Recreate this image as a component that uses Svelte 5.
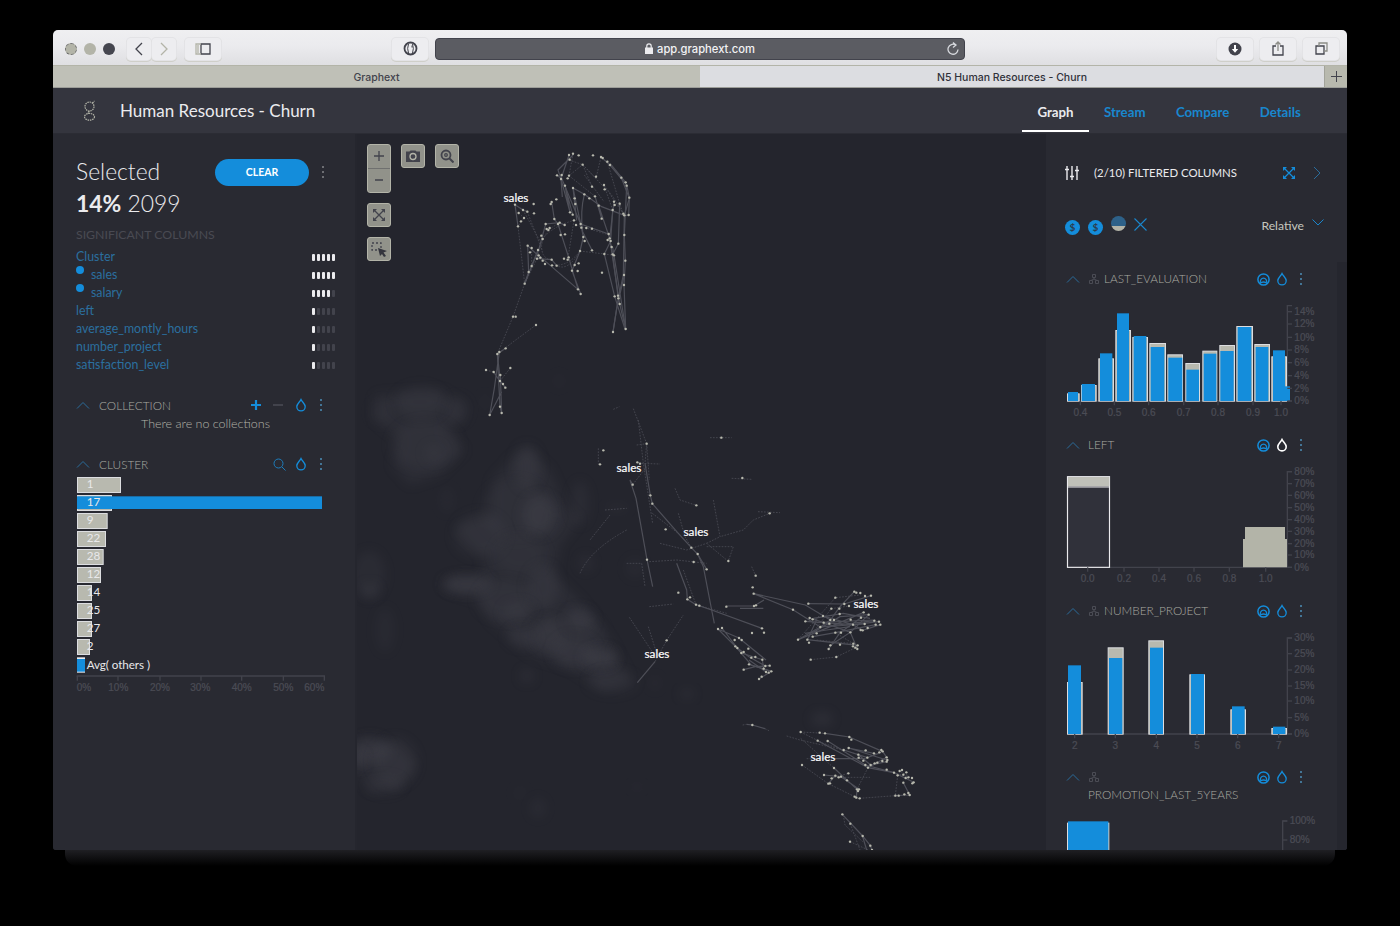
<script>
  const significant = [
    { name: 'Cluster', level: 5, sub: false },
    { name: 'sales', level: 5, sub: true },
    { name: 'salary', level: 4, sub: true },
    { name: 'left', level: 1, sub: false },
    { name: 'average_montly_hours', level: 1, sub: false },
    { name: 'number_project', level: 1, sub: false },
    { name: 'satisfaction_level', level: 1, sub: false }
  ];
  const clusters = [
    ['1', 132], ['17', 105], ['9', 92], ['22', 87], ['28', 80], ['12', 72],
    ['14', 45], ['25', 45], ['27', 45], ['2', 39]
  ];
  const clusterTicks = [[52, '0%', 72], [174, '10%', 175], [300, '20%', 300], [423, '30%', 421], [545, '40%', 545], [670, '50%', 670], [793, '60%', 763]];

  // Bars: [x, width, top]; charts use three units per pixel.
  const charts = [
    {
      title: 'LAST_EVALUATION', tree: true, box: '3 468 873 396', h: 132, base: 783, top: 497, axis: 727,
      grey: [[66, 38, 760], [108, 47, 735], [160, 47, 655], [211, 47, 570], [262, 47, 591], [313, 50, 609], [367, 47, 643], [421, 44, 669], [472, 45, 632], [523, 47, 615], [574, 50, 558], [628, 47, 612], [679, 47, 649]],
      blue: [[69, 30, 756], [110, 40, 732], [165, 37, 640], [216, 36, 520], [266, 38, 588], [317, 41, 621], [370, 42, 653], [424, 38, 689], [476, 38, 641], [526, 40, 633], [578, 41, 561], [632, 38, 621], [684, 36, 631], [708, 27, 739]],
      y: [['14%', 515], ['12%', 552], ['10%', 592], ['8%', 630], ['6%', 668], ['4%', 707], ['2%', 745], ['0%', 783]],
      x: [['0.4', 106], ['0.5', 208], ['0.6', 311], ['0.7', 416], ['0.8', 519], ['0.9', 624], ['1.0', 708]]
    },
    {
      title: 'LEFT', tree: false, box: '3 96 873 396', h: 132, base: 412, top: 125, axis: 727, white: true,
      grey: [], blue: [],
      y: [['80%', 125], ['70%', 161], ['60%', 196], ['50%', 233], ['40%', 269], ['30%', 304], ['20%', 341], ['10%', 375], ['0%', 412]],
      x: [['0.0', 128], ['0.2', 237], ['0.4', 342], ['0.6', 447], ['0.8', 553], ['1.0', 662]]
    },
    {
      title: 'NUMBER_PROJECT', tree: true, box: '3 84 873 396', h: 132, base: 402, top: 114, axis: 727,
      grey: [[66, 47, 246], [188, 48, 142], [310, 47, 121], [433, 47, 223], [556, 47, 328], [679, 47, 384]],
      blue: [[69, 39, 196], [192, 40, 174], [315, 39, 143], [438, 39, 222], [561, 38, 319], [684, 37, 380]],
      y: [['30%', 114], ['25%', 161], ['20%', 210], ['15%', 258], ['10%', 303], ['5%', 353], ['0%', 402]],
      x: [['2', 89], ['3', 211], ['4', 334], ['5', 456], ['6', 578], ['7', 701]]
    },
    {
      title: 'PROMOTION_LAST_5YEARS', tree: true, box: '3 582 873 396', h: 132, base: 990, top: 663, axis: 713, wrap: true,
      grey: [[66, 127, 668]], blue: [[69, 121, 664]],
      y: [['100%', 663], ['80%', 720]], x: []
    }
  ];

  const clouds = [
    [420, 402, 25, 16, .35], [425, 445, 34, 24, .33], [382, 412, 12, 12, .2], [457, 410, 12, 14, .25], [434, 453, 10, 9, .3],
    [527, 467, 13, 22, .5], [540, 515, 18, 20, .65], [515, 510, 34, 30, .25], [480, 535, 26, 22, .35], [520, 555, 26, 20, .3],
    [580, 503, 9, 22, .3], [467, 584, 25, 9, .65], [505, 600, 28, 20, .35], [543, 587, 16, 22, .45], [518, 612, 16, 10, .4],
    [548, 635, 18, 16, .5], [522, 637, 15, 10, .4], [580, 620, 14, 12, .55], [574, 652, 22, 16, .45], [600, 658, 17, 10, .75],
    [612, 682, 24, 11, .35], [571, 635, 35, 24, .2], [369, 575, 16, 24, .3], [370, 590, 9, 7, .4], [385, 630, 9, 22, .22],
    [370, 750, 20, 13, .6], [395, 762, 22, 24, .4], [385, 785, 18, 9, .3], [358, 760, 7, 9, .6], [527, 676, 7, 7, .35],
    [447, 500, 7, 13, .17], [586, 563, 7, 8, .3], [635, 568, 9, 10, .22], [538, 808, 8, 10, .25], [520, 793, 6, 6, .15],
    [822, 719, 11, 7, .4], [687, 694, 7, 5, .35], [559, 381, 4, 7, .2], [637, 787, 5, 4, .2], [655, 683, 5, 7, .2], [617, 508, 12, 4, .25], [485, 402, 4, 8, .18]
  ];
  const banks = [
    'M530,450L550,470L565,505L580,520L560,545L555,575L580,600L610,640L630,680L605,690L570,668L530,655L490,620L480,600L445,590L450,578L480,578L485,558L455,528L490,515L492,480L515,455Z',
    'M375,395L440,390L465,405L462,420L445,430L465,450L440,475L410,485L392,465L400,440L375,420Z',
    'M357,742L395,745L415,765L400,788L370,792L357,772Z'
  ];

  // Nodes and links of each region of the network, three units per pixel.
  const regions = [
    {
      ox: 355, oy: 135,
      nodes: [[642,60],[654,56],[644,74],[671,61],[683,89],[714,61],[738,66],[743,69],[757,80],[765,90],[799,128],[812,142],[815,152],[823,188],[821,240],[808,241],[805,236],[794,206],[777,200],[779,210],[773,225],[747,150],[749,163],[723,125],[711,155],[638,130],[642,122],[606,121],[620,120],[618,132],[630,152],[654,159],[659,190],[661,207],[688,178],[703,190],[720,184],[731,212],[740,251],[590,201],[587,207],[604,193],[598,252],[609,267],[614,263],[572,267],[575,282],[584,279],[580,285],[629,270],[645,232],[653,239],[657,256],[663,270],[677,267],[679,278],[694,279],[685,306],[689,318],[711,346],[711,281],[761,297],[764,310],[767,318],[758,315],[790,326],[770,336],[773,358],[777,361],[748,357],[808,300],[811,377],[807,420],[807,450],[779,484],[789,482],[790,490],[794,507],[812,582],[774,591],[741,413],[675,348],[671,385],[659,390],[651,407],[668,408],[641,367],[638,374],[627,371],[605,392],[591,391],[590,374],[570,387],[563,377],[556,368],[551,361],[546,371],[549,345],[530,339],[518,332],[525,352],[530,393],[521,411],[509,446],[669,463],[677,477],[563,312],[617,300],[630,298],[559,302],[480,209],[491,234],[504,225],[517,230],[536,207],[537,235],[507,249],[498,259],[489,274],[474,545],[482,545],[543,570],[427,657],[433,651],[452,640],[466,699],[393,705],[416,711],[436,720],[435,738],[444,747],[451,758],[435,815],[440,834],[404,840]],
      links: ['M642,60L618,132L609,105L654,60','M618,125L677,267L654,159L665,256','M618,132L645,232L630,152L653,239','M606,121L618,130L622,186','M738,66L765,90L815,150L823,188L821,240L808,241','M765,85L812,142','M688,178L740,215L808,241M688,178L654,159','M688,178Q675,230 683,290L711,346','M720,184L740,251M731,212L764,310L773,358','M815,152L808,300L811,377L807,450L812,582','M799,128L823,190L808,241L805,420L790,490','M777,200L764,310L794,507L812,582','M773,225L767,318L748,357L779,484L810,582','M794,206L790,326L773,358L790,490L774,591','M808,420L785,520L774,591M773,336L812,582','M677,267L761,297','M677,267L685,306L675,348L651,407L677,477M609,267L641,367L669,463','M629,270L614,263L572,267L551,345L530,393L509,446','M518,332L556,368L546,371L590,374L605,392','M518,332L521,411L509,446','M551,361L669,463M549,345L509,446','M590,201L598,252L609,267','M480,209L489,274M480,209L504,225L517,230','M427,657L452,640M427,657L436,738L451,758','M427,657L435,815L440,834L436,720M433,651L418,760L404,840L440,770M416,711L440,747'],
      faint: ['M654,56L642,122L683,89M683,89L723,130L738,66','M757,80L794,206L805,236L777,190L747,150L773,225','M642,75L683,89L711,155M642,122L720,184','M663,270L764,300','M609,267Q580,280 563,312L546,371L509,446M530,339L530,393','M591,391Q640,395 675,348L748,357L777,361','M563,312Q550,370 591,374M563,312Q590,275 657,256','M675,348Q640,410 605,392M657,256L638,374','M504,225L556,320M491,234L507,249L489,274L509,446M517,230L563,350','M509,446L474,545L427,657M543,570L482,615L427,657','M466,699L435,738M393,705L416,711','M683,89L760,170L800,230M688,120L747,200']
    },
    {
      ox: 560, oy: 400,
      nodes: [[130,151],[120,193],[232,187],[240,191],[260,131],[218,254],[271,286],[277,311],[261,479],[409,316],[317,388],[484,113],[547,234],[629,340],[394,443],[413,462],[401,486],[440,508],[505,483],[587,527],[578,562],[581,581],[355,578],[382,598],[390,592],[408,614],[418,617],[320,721],[499,620],[582,618],[588,616],[474,687],[486,684],[606,685],[612,698],[576,699],[537,714],[545,720],[524,720],[526,739],[532,744],[544,759],[551,756],[565,746],[586,771],[574,773],[567,793],[551,809],[607,779],[616,798],[611,806],[629,797],[634,814],[626,818],[618,816],[605,830],[597,837],[699,629],[745,611],[736,664],[749,654],[758,658],[714,719],[742,719],[747,728],[758,710],[770,700],[752,779],[829,771],[806,747],[811,736],[826,698],[843,698],[840,734],[880,731],[893,736],[892,747],[886,743],[879,739],[902,690],[908,691],[923,684],[914,672],[947,674],[943,662],[957,665],[961,674],[926,644],[911,637],[879,674],[872,659],[903,653],[853,612],[826,593],[838,626],[814,626],[789,648],[791,668],[811,660],[839,642],[867,618],[883,575],[889,578],[901,579],[915,588],[933,587],[781,681],[808,671],[822,660],[871,697]],
      links: ['M255,190L271,286L277,311','M218,254L210,240L228,295L261,479L278,560','M277,311L355,400L394,443L413,462L440,508','M350,490L380,570L382,598L408,614','M413,462L430,500L455,630L463,670','M408,614L455,630L606,685','M232,848L285,785','M500,618L582,618L612,600M540,625L610,625','M581,581L699,629L781,681M581,581L736,615L811,660','M474,687L537,714L618,780M474,687L526,739L574,795L634,814M486,684L532,744L567,770L616,798','M567,793L634,814L597,837M551,809L586,800L629,797M544,759L607,779L611,806M567,780L618,816','M714,719L781,681L811,660L840,620L883,575','M714,719L811,680L911,637','M745,611L853,612L933,587M749,654L791,668L871,697L926,644','M736,664L879,674L957,665M781,681L943,662M806,747L840,698L903,653M742,719L893,736M758,710L826,698L947,674','M811,736L871,697L892,747M789,648L879,674L908,691L961,674M742,719L770,660L749,654','M755,700L840,650L926,644M770,668L940,660M781,681L915,672M760,655L850,640L930,655M735,700L800,690L870,680'],
      faint: ['M220,26L260,131L255,190M260,131L268,240M235,60L250,190L278,370M260,200L218,254','M277,340L355,400M355,340L375,410L394,443M370,510L408,614M418,617L500,640','M208,652L290,775M265,680L290,760M285,785L320,721L370,645','M752,779L829,771L893,740M714,719L826,593L901,585M742,719L814,626L867,618M770,720L880,731L826,698','M460,300L480,410L550,390L580,360L629,340M200,390Q90,450 60,520M150,345L90,420M135,330L200,325','M300,430L380,450L440,430L500,480M440,430L480,410','M230,135L260,131M450,113L515,113M515,235L575,238M594,335L660,338M160,28L178,20M245,190L300,192','M345,265L360,300L409,316M440,440L520,440L505,483M200,490L245,490L255,560M268,485L350,480L440,490M268,620L340,612M575,500L587,527M115,145V193']
    },
    {
      ox: 690, oy: 690,
      nodes: [[187,105],[332,126],[389,128],[405,130],[383,152],[413,153],[336,225],[478,141],[484,149],[476,174],[461,180],[505,194],[506,203],[527,181],[532,203],[520,212],[526,225],[534,233],[542,225],[554,220],[562,218],[577,213],[552,190],[568,187],[574,180],[578,184],[590,202],[592,210],[590,215],[590,239],[612,248],[623,256],[629,243],[636,240],[640,254],[649,247],[647,264],[640,278],[655,262],[666,264],[671,277],[667,280],[655,309],[659,315],[643,313],[626,317],[616,317],[432,234],[402,255],[425,265],[436,257],[446,262],[453,260],[471,271],[475,250],[415,281],[420,280],[501,298],[507,298],[504,303],[494,320],[499,323],[509,325],[457,373],[481,401],[480,455],[518,438],[541,467],[546,480]],
      links: ['M170,103L187,105L225,116','M405,130L478,141L577,184M383,152L534,233M413,153L526,225L612,248','M461,180L532,203L574,187M476,174L590,210M430,206L527,206M505,194L542,225L590,215M476,174L552,190','M578,184L590,202L534,233L612,248L671,277','M432,234L501,298M402,255L453,260L507,298M415,281L436,257M501,298L499,323','M616,317L659,315L640,278','M457,373L518,438L541,467L546,480M518,440L530,480'],
      faint: ['M332,126L405,130M332,126L400,160L505,194M290,138L330,150L461,180M350,206L430,206','M332,145L432,234M336,225L415,281L494,320M425,265L475,250M446,262L540,262M534,233L501,298M509,325L616,317','M623,256L616,317M612,248L666,264L629,243M158,105L170,103M225,116L237,122','M460,375L465,405L518,455M481,401L510,480M480,455L535,480']
    }
  ];
  const labels = [[516, 198], [629, 468], [696, 532], [866, 604], [657, 654], [823, 757]];
</script>

{#snippet caret()}
  <svg class="caret" width="14" height="9" viewBox="0 0 14 9"><path d="M1 7.5 7 1.5l6 6" /></svg>
{/snippet}
{#snippet drop(white)}
  <svg class="drop" class:white width="12" height="14" viewBox="0 0 12 14"><path d="M6 1.500C4.500 4.500 1.800 6 1.800 8.700a4.200 4.200 0 0 0 8.400 0C10.200 6 7.500 4.500 6 1.500Z" /></svg>
{/snippet}
{#snippet dots()}
  <svg class="dots" width="4" height="14" viewBox="0 0 4 14"><circle cx="2" cy="2" r="1" /><circle cx="2" cy="7" r="1" /><circle cx="2" cy="12" r="1" /></svg>
{/snippet}

<div class="stage">
  <div class="window">
    <div class="toolbar">
      <div class="lights"><i></i><i></i><i class="dark"></i></div>
      <div class="nav">
        <span class="btn nb"><svg width="10" height="14" viewBox="0 0 10 14"><path d="M8 1 2 7l6 6" /></svg></span>
        <span class="btn nb pale"><svg width="10" height="14" viewBox="0 0 10 14"><path d="m2 1 6 6-6 6" /></svg></span>
      </div>
      <span class="btn side"><svg width="16" height="12" viewBox="0 0 16 12"><path d="M6 1h9v10H6Z" /><path d="M6 1H1v10h5M3 2v8" stroke="#b3b4a8" /></svg></span>
      <span class="btn onep"><svg width="15" height="15" viewBox="0 0 15 15"><ellipse cx="7.500" cy="7.500" rx="6" ry="6" stroke-width="1.800" /><path d="M5.500 3Q3.800 7.500 5.500 12M9.500 3Q11.200 7.500 9.500 12" stroke-width="1" /><path d="M9 4.500v2" stroke-width="1" /></svg></span>
      <div class="address">
        <svg class="lock" width="8" height="11" viewBox="0 0 8 11"><path d="M0 4.500h8V11H0Z" fill="#ebebee" /><path d="M1.800 5V3a2.200 2.200 0 0 1 4.400 0v2" fill="none" stroke="#ebebee" stroke-width="1.200" /></svg>
        <span>app.graphext.com</span>
        <svg class="reload" width="14" height="14" viewBox="0 0 14 14"><path d="M12 7.500a5 5 0 1 1-2.500-4.600M7 .500l3 2.400-3 2.600" /></svg>
      </div>
      <div class="actions">
        <span class="btn"><svg width="14" height="14" viewBox="0 0 14 14"><circle cx="7" cy="7" r="6.500" fill="#42434c" stroke="none" /><path d="M7 3v6" stroke="#fff" stroke-width="2" /><path d="M3.800 7 7 10.800 10.200 7Z" fill="#fff" stroke="none" /></svg></span>
        <span class="btn"><svg width="12" height="15" viewBox="0 0 12 15"><path d="M4 5H1v9h10V5H8" /><path d="M6 10V1M3.500 3.500 6 1l2.500 2.500" stroke="#8c8d87" /></svg></span>
        <span class="btn"><svg width="13" height="13" viewBox="0 0 13 13"><path d="M1 4h8v8H1Z" /><path d="M4 4V1h8v8H9" stroke="#8c8d87" /></svg></span>
      </div>
    </div>

    <div class="tabs">
      <div class="tab old">Graphext</div>
      <div class="tab cur">N5 Human Resources - Churn</div>
      <div class="plus"><svg width="11" height="11" viewBox="0 0 11 11"><path d="M5.500 0v11M0 5.500h11" stroke="#42434c" /></svg></div>
    </div>

    <header>
      <svg class="logo" width="14" height="22" viewBox="0 0 14 22"><circle cx="6.500" cy="6.500" r="4.500" /><path d="m9.500 3 2-2M6.500 11c-2 1-2 2 0 2.500" /><ellipse cx="6.500" cy="16.800" rx="5" ry="3.400" /></svg>
      <h1>Human Resources - Churn</h1>
      <nav><a class="on">Graph</a><a>Stream</a><a>Compare</a><a>Details</a></nav>
    </header>

    <main>
      <aside class="left">
        <div class="selhead"><span class="big">Selected</span><button>CLEAR</button>{@render dots()}</div>
        <div class="big count"><b>14%</b> 2099</div>
        <div class="sig">SIGNIFICANT COLUMNS</div>
        {#each significant as s}
          <div class="sigrow">
            {#if s.sub}<i class="bullet"></i>{/if}
            <span>{s.name}</span>
            <div class="meter">{#each [1, 2, 3, 4, 5] as n}<i class:full={n <= s.level}></i>{/each}</div>
          </div>
        {/each}
        <div class="group first">
          {@render caret()}<span class="name">COLLECTION</span>
          <div class="tools">
            <svg width="10" height="10" viewBox="0 0 10 10"><path d="M5 0v10M0 5h10" stroke="#148ddb" stroke-width="2.200" /></svg>
            <svg class="minus" width="10" height="10" viewBox="0 0 10 10"><path d="M0 5h10" stroke="#42434c" stroke-width="2" /></svg>
            {@render drop(false)}{@render dots()}
          </div>
        </div>
        <div class="none">There are no collections</div>
        <div class="group second">
          {@render caret()}<span class="name">CLUSTER</span>
          <div class="tools">
            <svg class="lens" width="13" height="13" viewBox="0 0 13 13"><circle cx="5.500" cy="5.500" r="4.500" /><path d="m9 9 3.500 3.500" /></svg>
            {@render drop(false)}{@render dots()}
          </div>
        </div>
        <svg class="clusters" width="295" height="226" viewBox="0 267 885 678">
          {#each clusters as c, i}
            <rect x="52.500" y={277.500 + i * 54} width={c[1] - 3} height="45" class="grey" />
            {#if i === 1}<rect x="51" y="334" width="735" height="38" fill="#148ddb" />{/if}
            <text x="80" y={310 + i * 54} class="lab">{c[0]}</text>
          {/each}
          <rect x="51" y="817" width="24" height="46" fill="#ebebee" />
          <rect x="51" y="822" width="24" height="38" fill="#148ddb" />
          <text x="80" y="851" class="lab" textLength="190">Avg( others )</text>
          <path d="M50 873H795" class="axis" />
          {#each clusterTicks as t}
            <path d="M{t[0]} 873v14" class="axis" />
            <text x={t[2]} y="917" class="tick mid">{t[1]}</text>
          {/each}
        </svg>
      </aside>

      <section class="graph">
        <svg class="net" width="691" height="717" viewBox="355 134 691 717">
          <defs><filter id="soft" x="-60%" y="-60%" width="220%" height="220%"><feGaussianBlur stdDeviation="5.500" /></filter></defs>
          {#each banks as b}<path d={b} fill="#42434c" opacity=".26" filter="url(#soft)" />{/each}
          {#each clouds as c}
            <ellipse cx={c[0]} cy={c[1]} rx={c[2]} ry={c[3]} opacity={c[4] * .75} fill="#42434c" filter="url(#soft)" />
          {/each}
          {#each regions as r}
            <g transform="translate({r.ox} {r.oy}) scale(.33333)">
              {#each r.faint as l}<path d={l} class="link faint" />{/each}
              {#each r.links as l}<path d={l} class="link" />{/each}
              {#each r.nodes as n}<circle cx={n[0]} cy={n[1]} r="3.600" fill="#b8b9ae" />{/each}
            </g>
          {/each}
          {#each labels as l}<text x={l[0]} y={l[1] + 4} class="sales">sales</text>{/each}
        </svg>
        <div class="controls">
          <div class="col">
            <span class="ctl zoomer"><svg width="12" height="38" viewBox="0 0 12 38"><path d="M6 2v10M1 7h10M2 31h8" /></svg></span>
            <span class="ctl"><svg width="14" height="14" viewBox="0 0 14 14"><path d="M2 2l10 10M12 2 2 12" /><path d="M1 1h4L1 5ZM13 1v4L9 1ZM1 13V9l4 4ZM13 13H9l4-4Z" fill="#42434c" stroke="none" /></svg></span>
            <span class="ctl"><svg width="16" height="16" viewBox="0 0 16 16"><path d="M1 2h9v7H1Z" stroke-dasharray="2 2" /><path d="m7 7 9 3-3.500 1.500L15 15l-2 1-2-3-2 2Z" fill="#33343d" stroke="none" /></svg></span>
          </div>
          <span class="ctl"><svg width="16" height="14" viewBox="0 0 16 14"><path d="M1 2.500h3.500l1-1h5l1 1H15V13H1Z" fill="#42434c" stroke="none" /><circle cx="8" cy="7.500" r="3" stroke="#b3b4a8" stroke-width="1.300" /></svg></span>
          <span class="ctl"><svg width="14" height="14" viewBox="0 0 14 14"><circle cx="6" cy="6" r="4.500" stroke-width="1.800" /><circle cx="6" cy="6" r="1.300" /><path d="m9 9 4.500 4.500" stroke-width="2" /></svg></span>
        </div>
      </section>

      <aside class="right">
        <div class="filt">
          <svg width="14" height="14" viewBox="0 0 14 14"><path d="M2 0v14M7 0v14M12 0v14M0 3.500h4M5 10.500h4M10 4.500h4" stroke="#ebebee" stroke-width="1.400" /></svg>
          <span>(2/10) FILTERED COLUMNS</span>
          <svg class="expand" width="12" height="12" viewBox="0 0 12 12"><path d="m1 1 10 10M11 1 1 11" /><path d="M0 0h4L0 4ZM12 0v4L8 0ZM0 12V8l4 4ZM12 12H8l4-4Z" fill="#148ddb" stroke="none" /></svg>
          <svg class="next" width="8" height="14" viewBox="0 0 8 14"><path d="m1 1 6 6-6 6" /></svg>
        </div>
        <div class="modes">
          <i class="coin">$</i><i class="coin">$</i><i class="half"></i>
          <svg class="cross" width="13" height="13" viewBox="0 0 13 13"><path d="m.5.500 12 12m0-12-12 12" /></svg>
          <span>Relative</span>
          <svg class="down" width="12" height="7" viewBox="0 0 12 7"><path d="m.5.500 5.500 5.500L11.500.500" /></svg>
        </div>
        <div class="list">
          <div class="charts">
            {#each charts as c}
              <div class="group" class:wrap={c.wrap}>
                {@render caret()}
                {#if c.tree}<svg class="tree" width="10" height="10" viewBox="0 0 10 10"><path d="M3.500.500h3v3h-3ZM.500 6.500h3v3h-3ZM6.500 6.500h3v3h-3ZM5 3.500v2M2 6.500l3-1.500 3 1.500" /></svg>{/if}
                <span class="name">{c.title}</span>
                <div class="tools">
                  <svg class="ring" width="13" height="13" viewBox="0 0 13 13"><circle cx="6.500" cy="6.500" r="5.600" /><path d="M3.500 9.500a3.200 3.200 0 1 1 6 0" stroke-width="1.200" /><path d="M2.500 10.500Q6.500 7.500 10.500 10.500" /></svg>
                  {@render drop(c.white)}{@render dots()}
                </div>
              </div>
              <svg class="chart" width="291" height={c.h} viewBox={c.box}>
                <path d="M{c.axis + 14} {c.top}H{c.axis}V{c.base}M66 {c.base}H{c.axis + 14}" class="axis" />
                {#each c.grey as b}<rect x={b[0] + 1.500} y={b[2] + 1.500} width={b[1] - 3} height={c.base - b[2] - 1} class="grey" />{/each}
                {#each c.blue as b}<rect x={b[0]} y={b[2]} width={b[1]} height={c.base - b[2]} fill="#148ddb" />{/each}
                {#if c.title === 'LEFT'}
                  <rect x="67.500" y="140" width="126" height="272" fill="#30313a" stroke="#ebebee" stroke-width="3.500" />
                  <rect x="69" y="141" width="124" height="28" fill="#bfc0b8" /><path d="M68 171H194" stroke="#ebebee" stroke-width="3" />
                  <path d="M594 412V327h6V291H720v36h6v85Z" fill="#b3b4a8" />
                {/if}
                {#each c.y as t}
                  <path d="M{c.axis} {t[1]}h14" class="axis" />
                  <text x={c.axis + 21} y={t[1] + 10} class="tick">{t[0]}</text>
                {/each}
                {#each c.x as t}
                  <path d="M{t[1]} {c.base}v13" class="axis" />
                  <text x={t[1]} y={c.base + 44} class="tick mid">{t[0]}</text>
                {/each}
              </svg>
            {/each}
          </div>
          <div class="rail"></div>
        </div>
      </aside>
    </main>
  </div>
  <div class="shade"></div>
</div>

<style>
  :global(body) { background: #000; }
  * { box-sizing: border-box; }
  svg { display: block; flex: none; fill: none; }
  .stage { width: 1400px; height: 926px; padding: 30px 53px 0; background: #000; font-family: Lato, sans-serif; overflow: hidden; }
  .window { width: 1294px; height: 820px; display: flex; flex-direction: column; border-radius: 5px 5px 3px 3px; overflow: hidden; background: #24252d; }
  .shade { height: 16px; margin: 0 12px; background: linear-gradient(#1f1f23, #000); border-radius: 0 0 12px 12px; }

  .toolbar { height: 35px; display: flex; align-items: center; background: linear-gradient(#efeff1, #ebebee 45%, #dfdfe2); padding: 2px 12px 0; }
  .lights { display: flex; gap: 7px; width: 62px; }
  .lights i { width: 12px; height: 12px; border-radius: 50%; background: #b3b4a8; }
  .lights i:first-child { border: 1px dashed #6c6d6c; }
  .lights i.dark { background: #45464f; }
  .btn { height: 22px; width: 36px; display: flex; align-items: center; justify-content: center; border-radius: 4px; background: #ededf0; box-shadow: 0 0 0 1px #e3e3e6, 0 1px 0 1px #cfcfc9; }
  .btn svg { stroke: #42434c; stroke-width: 1.300; }
  .nav { display: flex; gap: 1px; }
  .nb { width: 24px; }
  .pale svg { stroke: #b3b4a8; }
  .side { margin-left: 9px; width: 36px; }
  .onep { margin-left: 171px; }
  .address { position: relative; margin-left: 7px; width: 530px; height: 22px; border-radius: 4px; background: #5b5c62; border: 1px solid #42434c; display: flex; align-items: center; justify-content: center; gap: 4px; color: #f2f2f4; font: 500 11.200px Inter, sans-serif; }
  .reload { position: absolute; right: 4px; top: 3px; stroke: #d5d7dc; stroke-width: 1.300; }
  .actions { display: flex; gap: 7px; margin-left: auto; margin-right: -4px; }

  .tabs { height: 23px; display: flex; font: 500 10.500px Inter, sans-serif; color: #30313a; border-top: 1px solid #b3b4a8; border-bottom: 1px solid #9c9d98; }
  .tab { display: flex; align-items: center; justify-content: center; padding-top: 1px; }
  .old { width: 647px; background: #bfc0b7; color: #42434c; }
  .cur { width: 624px; background: #dcdde1; }
  .plus { flex: 1; background: #b8b9ae; display: flex; align-items: center; justify-content: center; border-left: 1px solid #a2a39a; }

  header { height: 46px; display: flex; align-items: center; background: #34353e; padding-left: 30px; border-bottom: 1px solid #2b2c34; }
  .logo { stroke: #b3b4a8; stroke-width: 1.200; stroke-dasharray: 1.500 .8; margin-right: 23px; margin-top: 1px; }
  h1 { margin: -1px 0 0; font-size: 17px; font-weight: 400; color: #ebebee; }
  nav { margin-left: auto; margin-right: 31px; display: flex; height: 46px; }
  nav a { padding: 15px 15.200px 0; font-size: 13.250px; line-height: 18px; font-weight: 700; color: #1987ce; height: 44px; }
  nav a.on { color: #ebebee; border-bottom: 2px solid #fff; }

  main { flex: 1; min-height: 0; display: flex; }
  .left { width: 304px; background: #292a32; padding: 22px 20px 0 23px; border-right: 2px solid #25262e; }
  .big { font-size: 22.900px; font-weight: 300; line-height: 28px; color: #ebebee; }
  .selhead { display: flex; align-items: center; height: 32px; }
  .selhead .big { margin-top: -2px; }
  button { margin-left: auto; width: 94px; height: 27px; border: 0; border-radius: 14px; background: #148ddb; color: #fff; font: 700 10.500px Lato, sans-serif; }
  .selhead :global(.dots) { margin: 0 10px 0 12px; fill: #85868a; }
  .count { line-height: 31px; height: 31px; }
  .count b { font-weight: 700; }
  .sig { height: 27px; line-height: 30px; margin-top: 1px; font-size: 12.300px; color: #494a53; font-weight: 400; }
  .sigrow { height: 18px; display: flex; align-items: center; font-size: 12.400px; color: #2b6f9f; font-weight: 400; }
  .bullet { width: 8px; height: 8px; border-radius: 50%; background: #148ddb; margin: -8px 7px 0 0; }
  .meter { margin-left: auto; display: flex; gap: 2px; margin-top: 2px; }
  .meter i { width: 3px; height: 7px; border-radius: 1px; background: #42434c; }
  .meter i.full { background: #ebebee; }

  .group { display: flex; align-items: center; height: 34px; }
  .left .group { height: 20px; }
  .left .first { margin-top: 22px; }
  .left .second { margin-top: 21px; }
  .caret { stroke: #2a6c9b; stroke-width: 1; }
  .name { font-size: 11.800px; font-weight: 300; color: #a9aaa2; margin-left: 9px; white-space: nowrap; }
  .tools { margin-left: auto; display: flex; align-items: center; gap: 12px; margin-right: 12px; }
  .drop { stroke: #148ddb; stroke-width: 1.300; }
  .drop.white { stroke: #fff; stroke-width: 1.600; }
  .dots { fill: #4c8fb9; }
  .lens { stroke: #1d7dbc; margin-right: -3px; }
  .none { height: 18px; line-height: 18px; font-size: 12.500px; font-weight: 300; color: #b3b4a8; text-align: center; }
  .clusters { margin-left: -16px; }

  .graph { position: relative; width: 689px; background: #24252d; overflow: hidden; }
  .net { margin-left: -2px; }
  .link { stroke: #4e4f58; stroke-width: 3.600; }
  .faint { stroke: #44454e; stroke-width: 3; stroke-dasharray: 5 4; }
  .sales { font: 400 11.700px Lato, sans-serif; fill: #fff; stroke: #fff; stroke-width: .2px; text-anchor: middle; }
  .controls { position: absolute; left: 10px; top: 9.500px; display: flex; gap: 10px; align-items: flex-start; }
  .col { display: flex; flex-direction: column; gap: 10px; }
  .ctl { width: 24px; height: 24px; border-radius: 3px; background: #91928a; border: 1px solid #b3b4a8; display: flex; align-items: center; justify-content: center; }
  .ctl svg { stroke: #42434c; stroke-width: 1.300; }
  .zoomer { height: 49px; background: linear-gradient(#91928a 23px, #6f706f 23px 24px, #91928a 24px); }

  .right { flex: 1; background: #292a32; display: flex; flex-direction: column; }
  .filt { height: 77px; display: flex; align-items: center; padding: 0 26px 0 19px; font-size: 11.400px; color: #ebebee; }
  .filt span { margin-left: 15px; }
  .expand { margin-left: auto; stroke: #148ddb; stroke-width: 1.200; }
  .next { margin-left: 18px; stroke: #2a6c9b; }
  .modes { height: 28px; display: flex; align-items: center; padding: 0 23px 0 19px; color: #c6c7bf; font-size: 12.200px; }
  .coin { width: 15px; height: 15px; border-radius: 50%; background: #148ddb; color: #2b3c4d; font: 700 10px/15px Lato, sans-serif; text-align: center; margin: 4px 8px 0 0; }
  .half { width: 15px; height: 15px; border-radius: 50%; background: linear-gradient(#2d6189 10px, #b3b4a8 10px); margin: -3px 8px 0 0; }
  .cross { stroke: #1a86cc; stroke-width: 1.100; margin-top: -2px; }
  .modes span { margin-left: auto; }
  .down { stroke: #1a86cc; margin: -5px 0 0 8px; }
  .list { flex: 1; min-height: 0; display: flex; margin-top: 23px; }
  .charts { width: 291px; height: 588px; overflow: hidden; }
  .rail { flex: 1; background: #25262e; }
  .right .group { padding-left: 20px; }
  .right .name { margin-top: -1px; margin-left: 8px; }
  .right .tools { margin-right: 34px; gap: 6px; }
  .right .tools .dots { margin-left: 5px; }
  .tree { stroke: #4b4c55; margin-left: 9px; }
  .right .tree + .name { margin-left: 5px; }
  .ring { stroke: #148ddb; stroke-width: 1.500; }
  .group.wrap { position: relative; }
  .right .wrap .tree + .name { position: absolute; left: 42px; top: 27px; margin: 0; }
  .grey { fill: #b8b9af; stroke: #dcdde0; stroke-width: 3; }
  .axis { stroke: #42434c; stroke-width: 4; }
  .lab { font: 400 35px Lato, sans-serif; fill: #e8e8ea; }
  .tick { font: 400 30px "Liberation Sans", sans-serif; fill: #4b4c55; stroke: #4b4c55; stroke-width: .7; }
  .mid { text-anchor: middle; }
</style>
